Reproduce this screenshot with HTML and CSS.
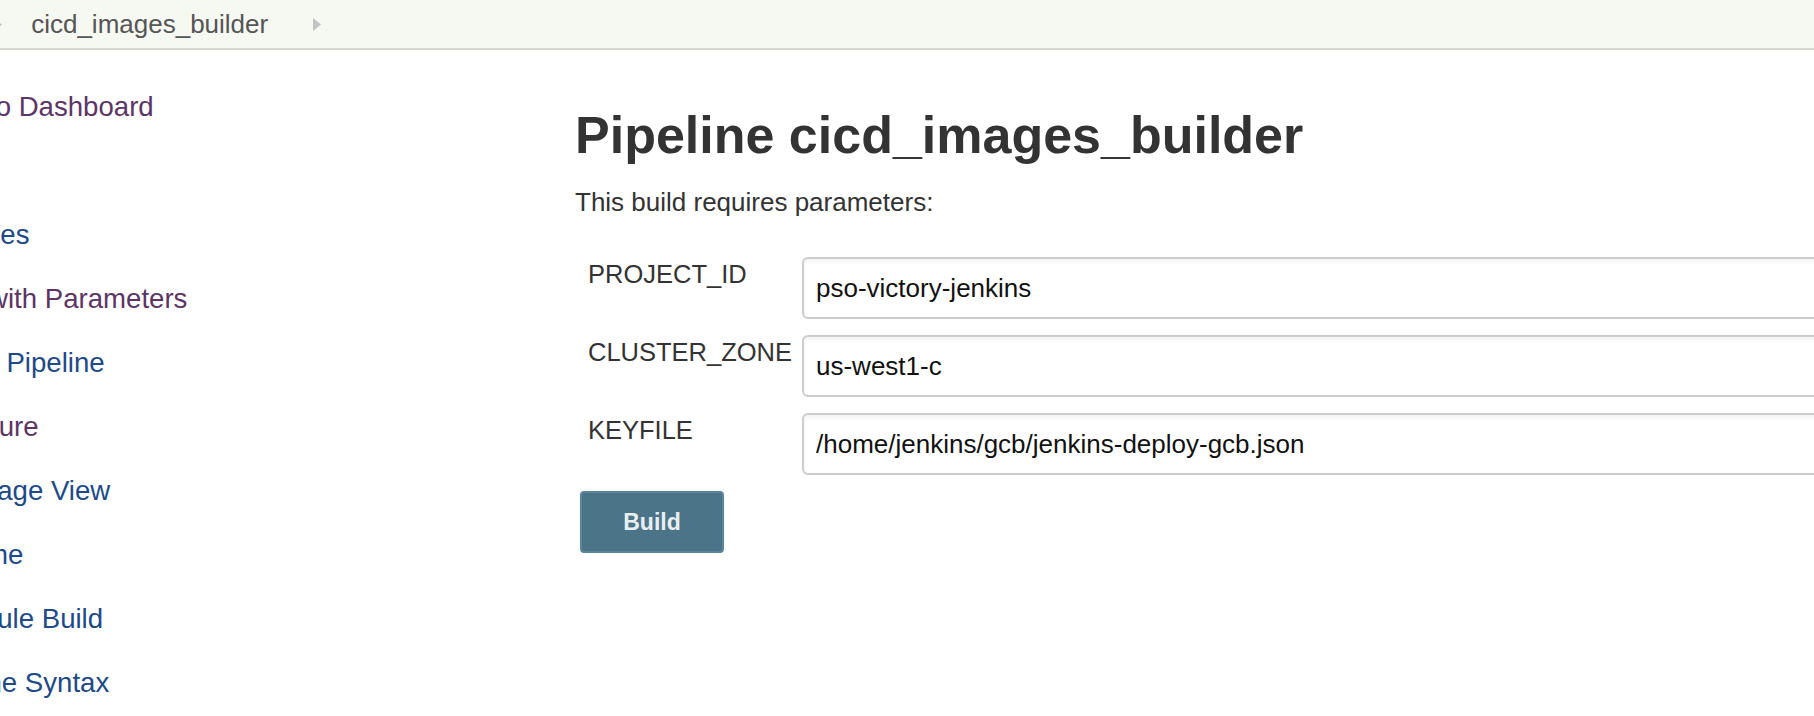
FILE: index.html
```html
<!DOCTYPE html>
<html lang="en">
<head>
<meta charset="utf-8">
<title>cicd_images_builder [Jenkins]</title>
<link rel="stylesheet" href="styles.css">
</head>
<body>
<div class="breadcrumb-bar">
  <ul class="breadcrumbs">
    <li class="crumb"><a class="crumb-link" href="#">Jenkins</a><svg class="crumb-arrow" viewBox="0 0 8 13" width="8" height="13"><path d="M0 0 L8 6.5 L0 13 Z"/></svg></li>
    <li class="crumb"><a class="crumb-link" href="#">cicd_images_builder</a><svg class="crumb-arrow" viewBox="0 0 8 13" width="8" height="13"><path d="M0 0 L8 6.5 L0 13 Z"/></svg></li>
  </ul>
</div>
<div class="layout">
  <nav class="tasks">
    <a class="task visited" href="#">Back to Dashboard</a>
    <a class="task" href="#">Status</a>
    <a class="task" href="#">Changes</a>
    <a class="task visited" href="#">Build with Parameters</a>
    <a class="task" href="#">Delete Pipeline</a>
    <a class="task visited" href="#">Configure</a>
    <a class="task" href="#">Full Stage View</a>
    <a class="task" href="#">Rename</a>
    <a class="task" href="#">Schedule Build</a>
    <a class="task" href="#">Pipeline Syntax</a>
  </nav>
  <main class="main">
    <h1 class="title">Pipeline cicd_images_builder</h1>
    <p class="desc">This build requires parameters:</p>
    <form class="params">
      <label class="param-name" for="p1">PROJECT_ID</label>
      <input class="param-input" id="p1" type="text" value="pso-victory-jenkins">
      <label class="param-name" for="p2">CLUSTER_ZONE</label>
      <input class="param-input" id="p2" type="text" value="us-west1-c">
      <label class="param-name" for="p3">KEYFILE</label>
      <input class="param-input" id="p3" type="text" value="/home/jenkins/gcb/jenkins-deploy-gcb.json">
    </form>
    <button class="build-btn" type="button">Build</button>
  </main>
</div>
</body>
</html>
```

FILE: styles.css
```css
html, body {
  margin: 0;
  padding: 0;
  background: #ffffff;
  overflow: hidden;
  font-family: "Liberation Sans", Arial, Helvetica, sans-serif;
  color: #333333;
}

.breadcrumb-bar {
  height: 48px;
  background: #f6f8f2;
  border-bottom: 2px solid #d3d7cf;
  overflow: hidden;
}

.breadcrumbs {
  list-style: none;
  margin: 0 0 0 -139px;
  padding: 0;
  display: flex;
  align-items: center;
  height: 48px;
}

.crumb {
  display: flex;
  align-items: center;
}

.crumb-link {
  font-size: 26px;
  line-height: 48px;
  color: #555555;
  text-decoration: none;
  white-space: nowrap;
}

.crumb-arrow {
  fill: #c2c2c2;
  margin: 0 29px 0 45px;
  flex: 0 0 auto;
}

.layout {
  display: flex;
  align-items: flex-start;
}

.tasks {
  flex: 0 0 560px;
  margin-left: -81px;
  padding-top: 25px;
  display: flex;
  flex-direction: column;
}

.task {
  display: block;
  font-size: 27.6px;
  line-height: 64px;
  color: #204a87;
  text-decoration: none;
  white-space: nowrap;
}

.task.visited {
  color: #5c3566;
}

.main {
  flex: 1 0 auto;
  padding-left: 96px;
}

.title {
  margin: 55px 0 0;
  font-size: 52px;
  line-height: 60px;
  font-weight: bold;
  color: #333333;
  white-space: nowrap;
}

.desc {
  margin: 22px 0 0;
  font-size: 26px;
  line-height: 30px;
  color: #333333;
}

.params {
  margin-top: 40px;
  display: grid;
  grid-template-columns: 227px 1100px;
  row-gap: 16px;
}

.param-name {
  padding: 2px 0 0 13px;
  font-size: 25.5px;
  line-height: 30px;
  color: #333333;
  white-space: nowrap;
}

.param-input {
  box-sizing: border-box;
  height: 62px;
  width: 1100px;
  margin: 0;
  padding: 0 12px;
  border: 2px solid #cccccc;
  border-radius: 6px;
  box-shadow: inset 0 3px 4px rgba(0, 0, 0, 0.05);
  font-family: "Liberation Sans", Arial, Helvetica, sans-serif;
  font-size: 26px;
  color: #111111;
  background: #ffffff;
  outline: none;
}

.build-btn {
  display: block;
  box-sizing: border-box;
  margin: 16px 0 0 5px;
  width: 144px;
  height: 62px;
  padding: 0;
  background: #4b7489;
  border: 2px solid #5b86a0;
  border-radius: 4px;
  font-family: "Liberation Sans", Arial, Helvetica, sans-serif;
  font-size: 23px;
  font-weight: bold;
  color: #e9eef1;
  cursor: pointer;
}
```
